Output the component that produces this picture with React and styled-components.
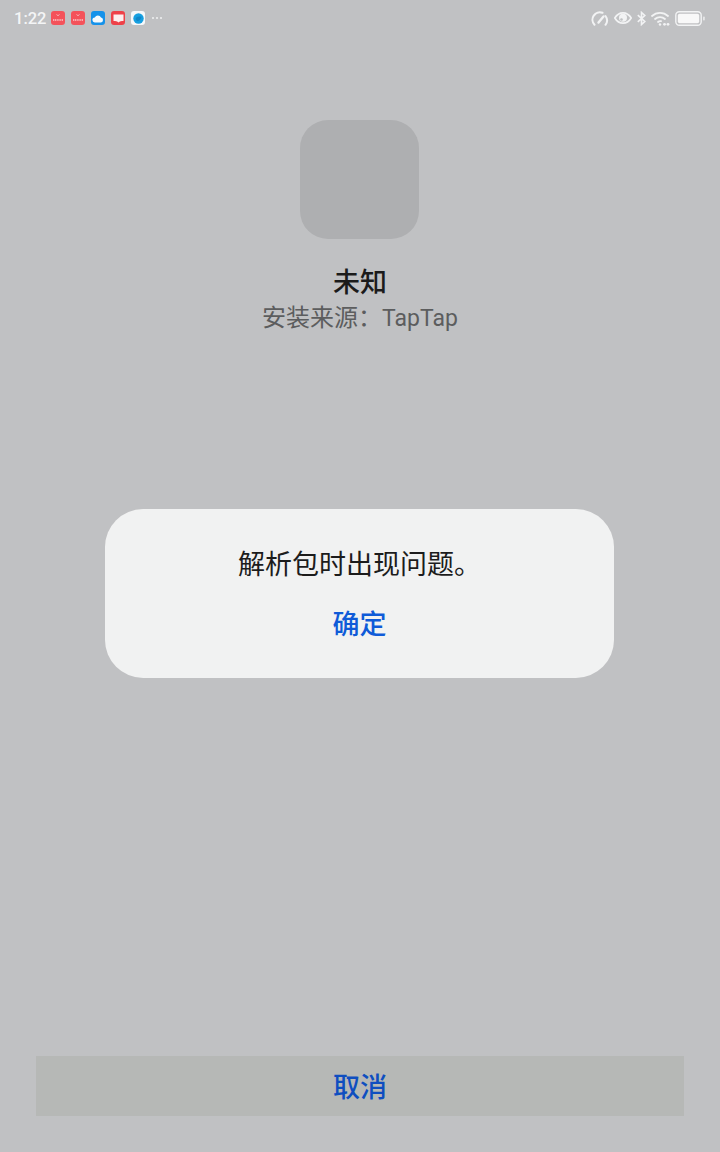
import styled, { createGlobalStyle } from "styled-components";

const Global = createGlobalStyle`
  html, body { margin:0; padding:0; background:#c0c1c3; }
  body { font-family:"Roboto","Noto Sans CJK SC",sans-serif; }
`;

const Page = styled.div`
  position:relative; width:720px; height:1152px; overflow:hidden;
  display:flex; flex-direction:column; align-items:center; background:#c0c1c3;
`;
const StatusBar = styled.div`
  width:100%; height:36px; box-sizing:border-box; padding:0 15px 0 14px;
  display:flex; align-items:center; justify-content:space-between; color:#f4f5f6;
`;
const Side = styled.div` display:flex; align-items:center; gap:${(p) => p.$gap}px; `;
const Clock = styled.span` font-size:16.5px; font-weight:500; margin-right:-1px; `;
const Dots = styled.span` display:flex; gap:2px; margin-left:1px; i { width:2px; height:2px; border-radius:50%; background:#f0f1f2; } `;
const Notif = styled.div`
  width:14px; height:14px; border-radius:3px; background:${(p) => p.$bg};
  display:flex; align-items:center; justify-content:center;
`;
const AppIcon = styled.div`
  margin:84px 1px 0 0; width:119px; height:119px; border-radius:28px; background:#aeafb1;
`;
const Title = styled.div`
  margin-top:25px; font-size:27px; line-height:38px; font-weight:500; color:#1b1b1b;
`;
const Source = styled.div`
  font-size:24px; line-height:32px; color:#5c5d5e;
  span { font-size:23px; font-weight:400; }
`;
const Scrim = styled.div`
  position:absolute; inset:0; padding-top:509px; box-sizing:border-box;
  display:flex; justify-content:center; align-items:flex-start;
`;
const Dialog = styled.div`
  width:509px; height:169px; margin-left:-1px; border-radius:38px; background:#f1f2f2; box-sizing:border-box;
  padding-top:38px; display:flex; flex-direction:column; align-items:center;
`;
const Message = styled.div` font-size:27px; line-height:37px; color:#1c1c1c; `;
const Confirm = styled.div` margin-top:22px; font-size:27px; line-height:38px; font-weight:500; color:#0f5bd8; `;
const Cancel = styled.div`
  margin-top:auto; margin-bottom:36px; width:648px; height:60px; background:#b6b8b6;
  display:flex; align-items:center; justify-content:center; padding-bottom:2px; box-sizing:border-box;
  font-size:27px; font-weight:500; color:#0f4ec0;
`;

const Icon = styled.svg` display:block; `;

function RedApp() {
  return (
    <Notif $bg="#f4525a">
      <Icon width="12" height="10" viewBox="0 0 12 10" fill="none" stroke="#fbc9cb">
        <path d="M4.500 1.500 6 2.700 7.500 1.500" strokeWidth=".8" />
        <path d="M1 7h10" strokeWidth="1.400" strokeDasharray="1.200 .6" />
      </Icon>
    </Notif>
  );
}

export default function App() {
  return (
    <Page>
      <Global />
      <StatusBar>
        <Side $gap={6}>
          <Clock>1:22</Clock>
          <RedApp />
          <RedApp />
          <Notif $bg="#1592ea">
            <Icon width="12" height="9" viewBox="0 0 12 9"><path d="M3 8.500a2.500 2.500 0 0 1-.2-5A3.400 3.400 0 0 1 9 3.600 2.500 2.500 0 0 1 9 8.500z" fill="#f6fafd" /></Icon>
          </Notif>
          <Notif $bg="#ee4148">
            <Icon width="11" height="9" viewBox="0 0 11 9"><path d="M.5.500h10v6.500c-2 0-4 .4-5 1.500-1-1.100-3-1.500-5-1.500z" fill="#fdeeee" /></Icon>
          </Notif>
          <Notif $bg="#f6f8fa">
            <Icon width="11" height="11" viewBox="0 0 11 11"><circle cx="5.500" cy="5.500" r="5.200" fill="#169fe0" /><path d="M2.500 6c1-2.500 3.500-3 6-2-.5 2.500-3 4.500-4.500 4z" fill="#0f86c8" /></Icon>
          </Notif>
          <Dots><i /><i /><i /></Dots>
        </Side>
        <Side $gap={5}>
          <Icon width="18" height="15" viewBox="0 0 18 15" fill="none" stroke="#f2f3f4" strokeWidth="2" strokeLinecap="round">
            <path d="M3.500 13.800A7.400 7.400 0 0 1 11.500 1.800" />
            <path d="M14.500 5A7.400 7.400 0 0 1 14.500 13.800" />
            <path d="M7.500 11.500 12.500 5.500" strokeWidth="2.400" />
          </Icon>
          <Icon width="18" height="12" viewBox="0 0 18 12">
            <path d="M.8 6C3 2.400 5.800.9 9 .9s6 1.500 8.200 5.100C15 9.600 12.200 11.100 9 11.100S3 9.600.8 6z" fill="none" stroke="#f2f3f4" strokeWidth="1.700" />
            <circle cx="9" cy="5.800" r="4" fill="#f2f3f4" />
            <circle cx="7.500" cy="7.500" r="1.300" fill="#c0c1c3" />
          </Icon>
          <Icon width="9" height="15" viewBox="0 0 9 15" fill="none" stroke="#f2f3f4" strokeWidth="1.600">
            <path d="M.8 4.200 7.800 10.500 4.500 13.500V1.500L7.800 4.500 .8 10.800" />
          </Icon>
          <Icon width="19" height="15" viewBox="0 0 19 15" fill="none" stroke="#f2f3f4" strokeWidth="1.800" strokeLinecap="round">
            <path d="M1 5C5.500.8 12.500.8 17 5" />
            <path d="M4 8C6.800 5.400 11.200 5.400 14 8" />
            <path d="M7 11C8 10.200 9 10 10 10.200" />
            <circle cx="9" cy="13.500" r="1.200" fill="#f2f3f4" stroke="none" />
            <circle cx="13.500" cy="13.300" r="1.400" fill="#f2f3f4" stroke="none" />
            <circle cx="17" cy="13.300" r="1.400" fill="#f2f3f4" stroke="none" />
          </Icon>
          <Icon width="30" height="15" viewBox="0 0 30 15">
            <rect x=".8" y=".8" width="25.400" height="13.400" rx="3.500" fill="none" stroke="#f2f3f4" strokeWidth="1.400" />
            <rect x="2.800" y="2.800" width="21.400" height="9.400" rx="1.800" fill="#f8f8f8" />
            <rect x="28" y="5.500" width="1.800" height="4" rx=".8" fill="#e6e7e8" />
          </Icon>
        </Side>
      </StatusBar>
      <AppIcon />
      <Title>未知</Title>
      <Source>安装来源：<span>TapTap</span></Source>
      <Scrim>
        <Dialog>
          <Message>解析包时出现问题。</Message>
          <Confirm>确定</Confirm>
        </Dialog>
      </Scrim>
      <Cancel>取消</Cancel>
    </Page>
  );
}
